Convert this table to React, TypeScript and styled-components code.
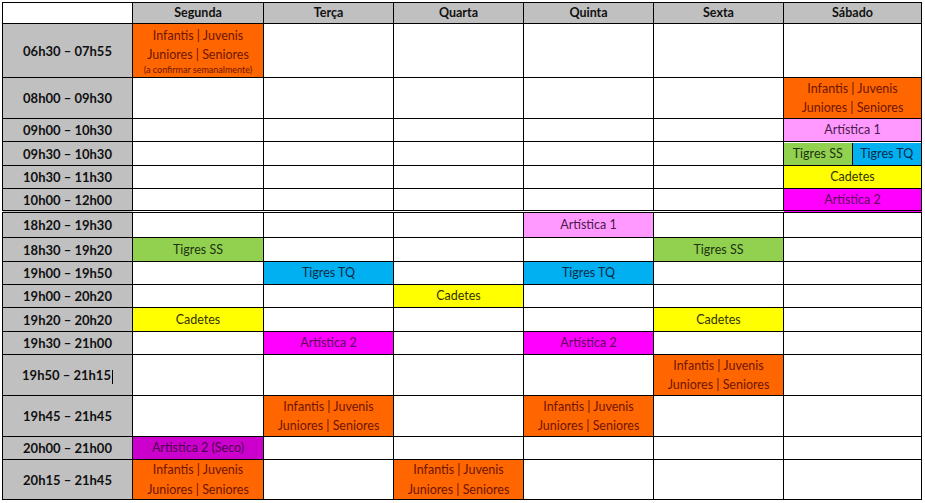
import styled, { createGlobalStyle } from 'styled-components';

type Kind = 'inf' | 'art1' | 'ss' | 'tq' | 'cad' | 'art2' | 'seco';

type Slot = Kind | 'split' | 'infNote' | null;

type Row = {
  time: string;
  height: number;
  slots: Slot[];
  double?: boolean;
  caret?: boolean;
};

const palette: Record<Kind, { bg: string; fg: string; label: string[] }> = {
  inf: { bg: '#ff6600', fg: '#6e1500', label: ['Infantis | Juvenis', 'Juniores | Seniores'] },
  art1: { bg: '#ff99ff', fg: '#4a1a4a', label: ['Artística 1'] },
  ss: { bg: '#92d050', fg: '#1c3310', label: ['Tigres SS'] },
  tq: { bg: '#00b0f0', fg: '#0c2a48', label: ['Tigres TQ'] },
  cad: { bg: '#ffff00', fg: '#333300', label: ['Cadetes'] },
  art2: { bg: '#ff00ff', fg: '#5c0a5c', label: ['Artística 2'] },
  seco: { bg: '#cc00cc', fg: '#4c004c', label: ['Artistica 2 (Seco)'] },
};

const days = ['Segunda', 'Terça', 'Quarta', 'Quinta', 'Sexta', 'Sábado'];
const widths = [130, 131, 130, 130, 130, 130, 138];

const rows: Row[] = [
  { time: '06h30 – 07h55', height: 54, slots: ['infNote', null, null, null, null, null] },
  { time: '08h00 – 09h30', height: 41, slots: [null, null, null, null, null, 'inf'] },
  { time: '09h00 – 10h30', height: 23, slots: [null, null, null, null, null, 'art1'] },
  { time: '09h30 – 10h30', height: 24, slots: [null, null, null, null, null, 'split'] },
  { time: '10h30 – 11h30', height: 23, slots: [null, null, null, null, null, 'cad'] },
  { time: '10h00 – 12h00', height: 23, slots: [null, null, null, null, null, 'art2'] },
  { time: '18h20 – 19h30', height: 26, double: true, slots: [null, null, null, 'art1', null, null] },
  { time: '18h30 – 19h20', height: 24, slots: ['ss', null, null, null, 'ss', null] },
  { time: '19h00 – 19h50', height: 23, slots: [null, 'tq', null, 'tq', null, null] },
  { time: '19h00 – 20h20', height: 23, slots: [null, null, 'cad', null, null, null] },
  { time: '19h20 – 20h20', height: 24, slots: ['cad', null, null, null, 'cad', null] },
  { time: '19h30 – 21h00', height: 23, slots: [null, 'art2', null, 'art2', null, null] },
  { time: '19h50 – 21h15', height: 41, caret: true, slots: [null, null, null, null, 'inf', null] },
  { time: '19h45 – 21h45', height: 41, slots: [null, 'inf', null, 'inf', null, null] },
  { time: '20h00 – 21h00', height: 23, slots: ['seco', null, null, null, null, null] },
  { time: '20h15 – 21h45', height: 40, slots: ['inf', null, 'inf', null, null, null] },
];

const GlobalStyle = createGlobalStyle`
  body {
    margin: 0;
    background: #ffffff;
    font-family: Lato, "Liberation Sans", sans-serif;
  }
`;

const Page = styled.div`
  padding: 2px 0 0 2px;
`;

const Grid = styled.table`
  border-collapse: collapse;
  table-layout: fixed;
  width: 920px;
  font-size: 12.5px;
  color: #111;
`;

const HeadCell = styled.th<{ $blank?: boolean }>`
  height: 20px;
  padding: 0;
  border: 1px solid #000;
  background: ${(p) => (p.$blank ? '#ffffff' : '#c0c0c0')};
  font-weight: 700;
  text-align: center;
  line-height: 18px;
`;

const TimeCell = styled.td<{ $double?: boolean }>`
  padding: 0;
  border: 1px solid #000;
  border-top: ${(p) => (p.$double ? '3px double #000' : '1px solid #000')};
  background: #c0c0c0;
  font-weight: 700;
  font-size: 13px;
  text-align: center;
  vertical-align: middle;
  white-space: nowrap;
  line-height: 18px;
`;

const SlotCell = styled.td<{ $bg?: string; $fg?: string; $double?: boolean; $tight?: boolean }>`
  padding: 0;
  border: 1px solid #000;
  border-top: ${(p) => (p.$double ? '3px double #000' : '1px solid #000')};
  background: ${(p) => p.$bg ?? '#ffffff'};
  color: ${(p) => p.$fg ?? '#111'};
  text-align: center;
  vertical-align: middle;
  line-height: ${(p) => (p.$tight ? '19px' : '19.5px')};
  white-space: nowrap;
`;

const Note = styled.div`
  font-size: 9px;
  line-height: 12px;
`;

const Split = styled.div`
  display: flex;
  height: 100%;
`;

const Half = styled.div<{ $bg: string; $fg: string; $grow: number; $divider?: boolean }>`
  flex: ${(p) => p.$grow} 0 0;
  background: ${(p) => p.$bg};
  color: ${(p) => p.$fg};
  border-left: ${(p) => (p.$divider ? '1px solid #000' : 'none')};
  line-height: 22px;
`;

const Caret = styled.span`
  display: inline-block;
  width: 1px;
  height: 14px;
  margin-left: 1px;
  background: #000;
  vertical-align: middle;
`;

const renderSlot = (slot: Slot, key: number, double?: boolean) => {
  if (slot === null) return <SlotCell key={key} $double={double} />;
  if (slot === 'split') {
    return (
      <SlotCell key={key} $double={double}>
        <Split>
          <Half $bg={palette.ss.bg} $fg={palette.ss.fg} $grow={68}>
            Tigres SS
          </Half>
          <Half $bg={palette.tq.bg} $fg={palette.tq.fg} $grow={69} $divider>
            Tigres TQ
          </Half>
        </Split>
      </SlotCell>
    );
  }
  const kind: Kind = slot === 'infNote' ? 'inf' : slot;
  const c = palette[kind];
  return (
    <SlotCell key={key} $bg={c.bg} $fg={c.fg} $double={double} $tight={slot === 'infNote'}>
      {c.label.map((l) => (
        <div key={l}>{l}</div>
      ))}
      {slot === 'infNote' && <Note>(a confirmar semanalmente)</Note>}
    </SlotCell>
  );
};

const App = () => {
  return (
    <Page>
      <GlobalStyle />
      <Grid>
        <colgroup>
          {widths.map((w, i) => (
            <col key={i} style={{ width: w }} />
          ))}
        </colgroup>
        <thead>
          <tr>
            <HeadCell $blank />
            {days.map((d) => (
              <HeadCell key={d}>{d}</HeadCell>
            ))}
          </tr>
        </thead>
        <tbody>
          {rows.map((r, i) => (
            <tr key={i} style={{ height: r.height }}>
              <TimeCell $double={r.double}>
                {r.time}
                {r.caret && <Caret />}
              </TimeCell>
              {r.slots.map((s, j) => renderSlot(s, j, r.double))}
            </tr>
          ))}
        </tbody>
      </Grid>
    </Page>
  );
};

export default App;
